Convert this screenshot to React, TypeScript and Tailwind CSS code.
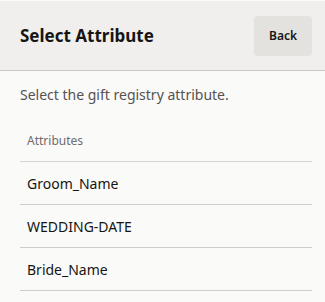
import React from "react";

export default function App() {
  const items = ["Groom_Name", "WEDDING-DATE", "Bride_Name"];
  return (
    <div
      className="w-[325px] h-[302px] bg-[#fafaf9] overflow-hidden"
      style={{ fontFamily: '"Noto Sans", "Open Sans", sans-serif' }}
    >
      <div className="h-[71px] bg-[#f1efed] border-t border-t-[#fbfaf9] border-b border-b-[#c9c7c4] flex items-center justify-between pl-5 pr-[13px]">
        <h1 className="text-[17px] font-bold text-[#161513] leading-none">Select Attribute</h1>
        <button className="w-[58px] h-[40px] rounded-[4px] bg-[#e4e2df] text-[12px] font-semibold text-[#161513]">
          Back
        </button>
      </div>
      <div className="pl-5 pr-[13px]">
        <p className="mt-[13px] text-[14px] leading-[22px] text-[#555351]">
          Select the gift registry attribute.
        </p>
        <div className="mt-[14px] h-[42px] flex items-center pl-[7px] text-[12px] text-[#6f6c69] border-b border-[#d6d4d1]">
          Attributes
        </div>
        {items.map((t) => (
          <div
            key={t}
            className="h-[43px] flex items-center pl-[7px] text-[14px] text-[#161513] border-b border-[#cfccc9]"
          >
            {t}
          </div>
        ))}
      </div>
    </div>
  );
}
